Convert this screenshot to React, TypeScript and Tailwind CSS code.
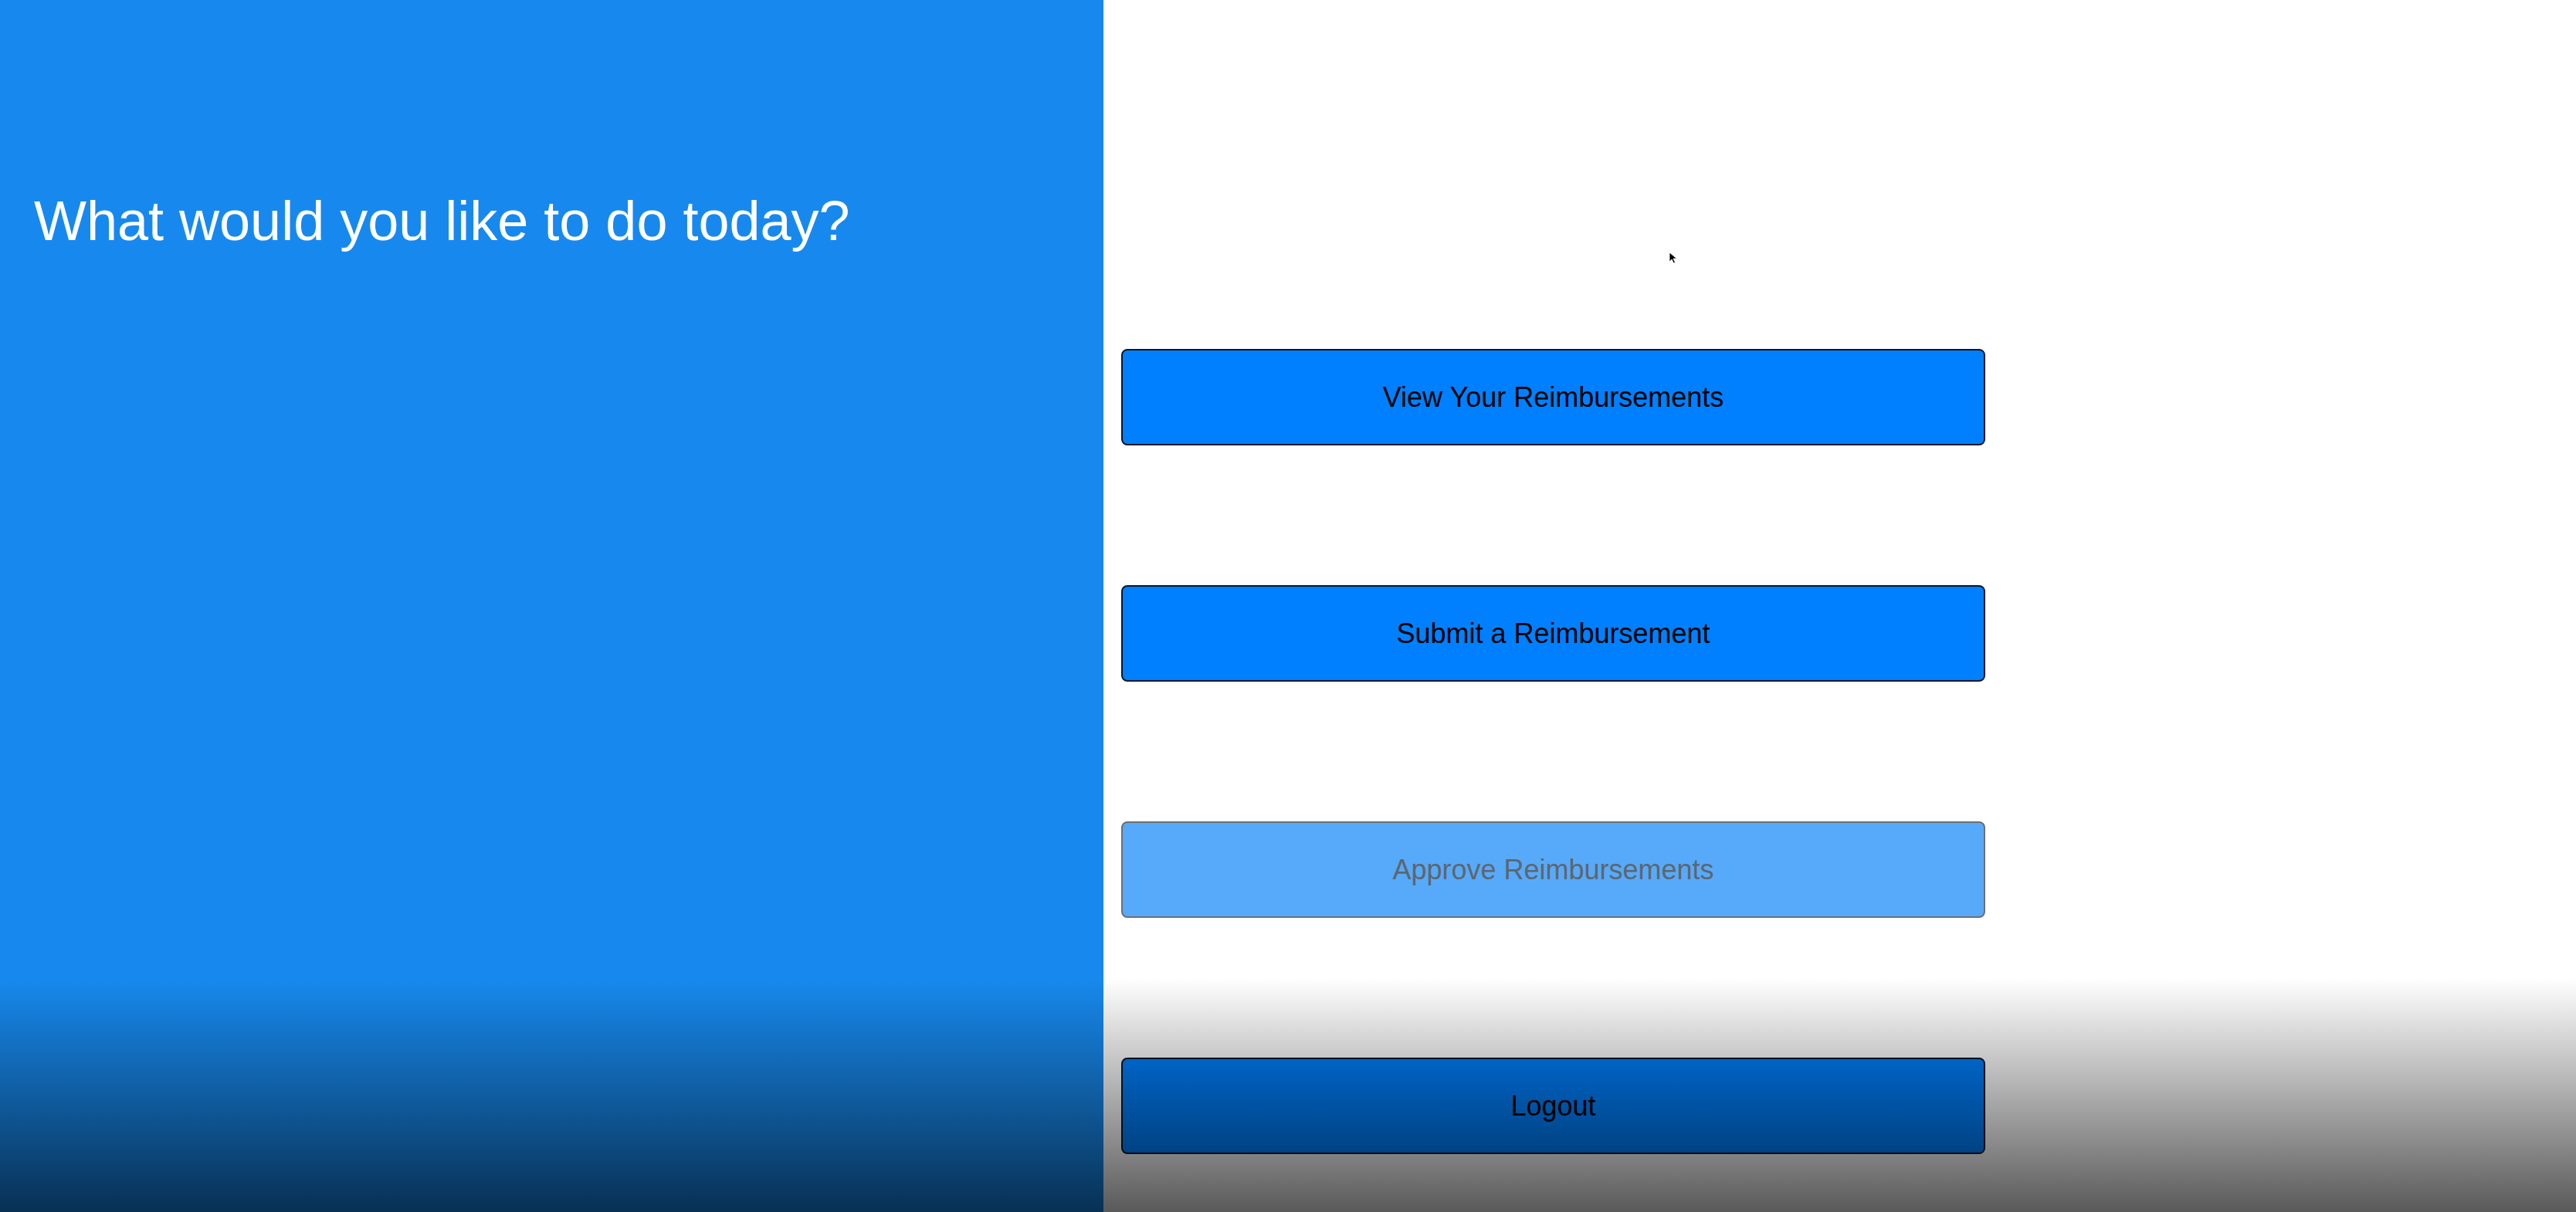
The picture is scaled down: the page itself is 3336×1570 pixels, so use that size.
const actions = [
  { label: "View Your Reimbursements", disabled: false },
  { label: "Submit a Reimbursement", disabled: false },
  { label: "Approve Reimbursements", disabled: true },
  { label: "Logout", disabled: false },
];

function ActionButton({ label, disabled }: { label: string; disabled: boolean }) {
  return (
    <button
      disabled={disabled}
      className={
        disabled
          ? "h-[125px] w-[1119px] rounded-[8px] border-2 border-[#6b6f74] bg-[#57aaf9] text-[36px] text-[#5d6670]"
          : "h-[125px] w-[1119px] rounded-[8px] border-2 border-[#0b1726] bg-[#0080fe] text-[36px] text-black"
      }
    >
      {label}
    </button>
  );
}

export default function App() {
  return (
    <div className="relative flex h-[1570px] w-full overflow-hidden bg-white font-['Liberation_Sans',Arial,sans-serif]">
      <aside className="h-full w-[1429px] shrink-0 bg-[#1789ee] pl-[44px] pt-[250px]">
        <h1 className="text-[72px] leading-[72px] text-white">What would you like to do today?</h1>
      </aside>

      <main className="flex flex-1 flex-col gap-[181px] pl-[23px] pt-[452px]">
        {actions.map((a) => (
          <ActionButton key={a.label} label={a.label} disabled={a.disabled} />
        ))}
      </main>

      {/* mouse pointer */}
      <svg className="pointer-events-none absolute left-[2161px] top-[326px]" width="12" height="16" viewBox="0 0 12 16">
        <path d="M1 1 L1 13 L4 10 L6.5 15 L8.5 14 L6 9 L10.5 9 Z" fill="black" stroke="white" strokeWidth="0.8" />
      </svg>

      {/* bottom fade */}
      <div className="pointer-events-none absolute inset-x-0 bottom-0 h-[303px] bg-gradient-to-b from-transparent to-black/65" />
    </div>
  );
}
